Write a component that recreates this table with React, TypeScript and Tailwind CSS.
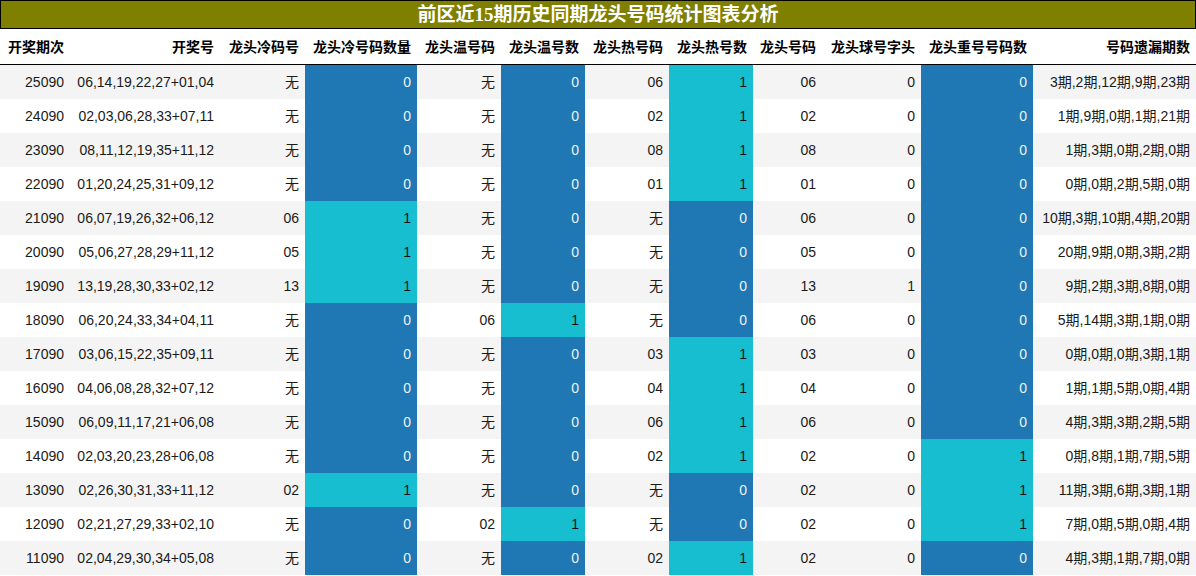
const headers = [
  "开奖期次",
  "开奖号",
  "龙头冷码号",
  "龙头冷号码数量",
  "龙头温号码",
  "龙头温号数",
  "龙头热号码",
  "龙头热号数",
  "龙头号码",
  "龙头球号字头",
  "龙头重号号码数",
  "号码遗漏期数",
];

// columns holding a 0/1 count get the coloured fill
const countCols = [3, 5, 7, 10];

const rows: string[][] = [
  ["25090", "06,14,19,22,27+01,04", "无", "0", "无", "0", "06", "1", "06", "0", "0", "3期,2期,12期,9期,23期"],
  ["24090", "02,03,06,28,33+07,11", "无", "0", "无", "0", "02", "1", "02", "0", "0", "1期,9期,0期,1期,21期"],
  ["23090", "08,11,12,19,35+11,12", "无", "0", "无", "0", "08", "1", "08", "0", "0", "1期,3期,0期,2期,0期"],
  ["22090", "01,20,24,25,31+09,12", "无", "0", "无", "0", "01", "1", "01", "0", "0", "0期,0期,2期,5期,0期"],
  ["21090", "06,07,19,26,32+06,12", "06", "1", "无", "0", "无", "0", "06", "0", "0", "10期,3期,10期,4期,20期"],
  ["20090", "05,06,27,28,29+11,12", "05", "1", "无", "0", "无", "0", "05", "0", "0", "20期,9期,0期,3期,2期"],
  ["19090", "13,19,28,30,33+02,12", "13", "1", "无", "0", "无", "0", "13", "1", "0", "9期,2期,3期,8期,0期"],
  ["18090", "06,20,24,33,34+04,11", "无", "0", "06", "1", "无", "0", "06", "0", "0", "5期,14期,3期,1期,0期"],
  ["17090", "03,06,15,22,35+09,11", "无", "0", "无", "0", "03", "1", "03", "0", "0", "0期,0期,0期,3期,1期"],
  ["16090", "04,06,08,28,32+07,12", "无", "0", "无", "0", "04", "1", "04", "0", "0", "1期,1期,5期,0期,4期"],
  ["15090", "06,09,11,17,21+06,08", "无", "0", "无", "0", "06", "1", "06", "0", "0", "4期,3期,3期,2期,5期"],
  ["14090", "02,03,20,23,28+06,08", "无", "0", "无", "0", "02", "1", "02", "0", "1", "0期,8期,1期,7期,5期"],
  ["13090", "02,26,30,31,33+11,12", "02", "1", "无", "0", "无", "0", "02", "0", "1", "11期,3期,6期,3期,1期"],
  ["12090", "02,21,27,29,33+02,10", "无", "0", "02", "1", "无", "0", "02", "0", "1", "7期,0期,5期,0期,4期"],
  ["11090", "02,04,29,30,34+05,08", "无", "0", "无", "0", "02", "1", "02", "0", "0", "4期,3期,1期,7期,0期"],
];

const grid =
  "grid grid-cols-[70px_150px_85px_112px_84px_84px_84px_84px_69px_99px_112px_163px]";

function Cell({ value, col }: { value: string; col: number }) {
  let tone = "";
  if (countCols.includes(col)) {
    tone = value === "1" ? "bg-[#17becf] text-[#111]" : "bg-[#1f77b4] text-[#eef2f6]";
  }
  return (
    <div className={`flex items-center justify-end pr-[6px] whitespace-nowrap ${tone}`}>
      {value}
    </div>
  );
}

export default function App() {
  return (
    <div className="w-[1196px] h-[576px] overflow-hidden bg-white font-['Liberation_Sans','Noto_Sans_CJK_SC',sans-serif] text-[14px] text-[#1a1a1a]">
      <div className="h-[29px] border border-black bg-[#808000] flex items-center justify-center">
        <span className="text-white font-bold text-[19px] leading-none font-['Liberation_Serif','Noto_Sans_CJK_SC',serif]">
          前区近15期历史同期龙头号码统计图表分析
        </span>
      </div>

      <div className={`${grid} h-[36px] border-b border-black font-bold text-black`}>
        {headers.map((h) => (
          <div key={h} className="flex items-center justify-end pr-[6px] pt-[2px] whitespace-nowrap">
            {h}
          </div>
        ))}
      </div>

      {rows.map((r, i) => (
        <div key={r[0]} className={`${grid} h-[34px] ${i % 2 === 0 ? "bg-[#f4f4f4]" : "bg-white"}`}>
          {r.map((v, c) => (
            <Cell key={c} value={v} col={c} />
          ))}
        </div>
      ))}
    </div>
  );
}
